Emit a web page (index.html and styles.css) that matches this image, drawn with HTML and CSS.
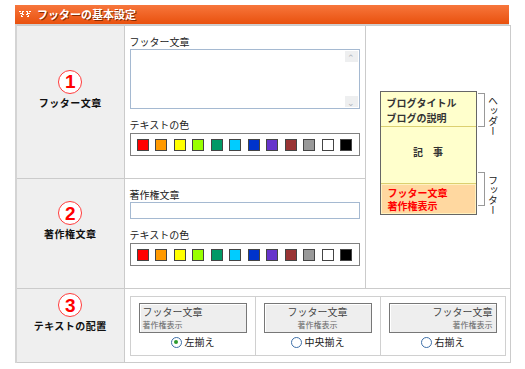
FILE: index.html
```html
<!DOCTYPE html>
<html>
<head>
    <title>フッターの基本設定</title>
    <meta http-equiv="Content-Type" content="text/html;charset=UTF-8"/>
    <link rel="stylesheet" href="styles.css">
</head>
<body>
<div class="setting-title">
    <svg class="title-icon" width="12" height="7" viewBox="0 0 12 7">
        <path d="M0 0h2v1H0zM3 0h2v1H3zM7 0h2v1H7zM10 0h2v1h-2zM1 2h2v1H1zM3 1h1v3H3zM8 1h1v3H8zM9 2h2v1H9zM2 4h1v2H2zM4 3h1v1H4zM7 3h1v1H7zM9 4h1v2H9zM3 5h1v1H3zM8 5h1v1H8z" fill="#fff"/>
    </svg>
    <span>フッターの基本設定</span>
</div>
<table class="setting-table">
    <colgroup>
        <col class="col-head">
        <col class="col-form">
        <col class="col-preview">
    </colgroup>
    <tr class="row-footer">
        <th class="item-head">
            <span class="step-num">1</span>
            <span class="item-name">フッター文章</span>
        </th>
        <td class="item-form">
            <div class="field-label">フッター文章</div>
            <div class="text-area">
                <div class="scroll-bar">
                    <span class="scroll-btn">&#8963;</span>
                    <span class="scroll-btn">&#8964;</span>
                </div>
            </div>
            <div class="field-label color-label">テキストの色</div>
            <div class="palette">
                <span class="swatch" style="background:#ff0000"></span>
                <span class="swatch" style="background:#ff9900"></span>
                <span class="swatch" style="background:#ffff00"></span>
                <span class="swatch" style="background:#99ff00"></span>
                <span class="swatch" style="background:#009966"></span>
                <span class="swatch" style="background:#00ccff"></span>
                <span class="swatch" style="background:#0033cc"></span>
                <span class="swatch" style="background:#6633cc"></span>
                <span class="swatch" style="background:#993333"></span>
                <span class="swatch" style="background:#999999"></span>
                <span class="swatch" style="background:#ffffff"></span>
                <span class="swatch" style="background:#000000"></span>
            </div>
        </td>
        <td class="item-preview" rowspan="2">
            <div class="blog-sample">
                <div class="blog-box">
                    <div class="blog-header">ブログタイトル<br>ブログの説明</div>
                    <div class="blog-article">記　事</div>
                    <div class="blog-footer">フッター文章<br>著作権表示</div>
                </div>
                <div class="blog-side">
                    <div class="side-mark">
                        <span class="bracket"></span>
                        <span class="side-name">ヘッダー</span>
                    </div>
                    <div class="side-mark">
                        <span class="bracket"></span>
                        <span class="side-name">フッター</span>
                    </div>
                </div>
            </div>
        </td>
    </tr>
    <tr class="row-copy">
        <th class="item-head">
            <span class="step-num">2</span>
            <span class="item-name">著作権文章</span>
        </th>
        <td class="item-form">
            <div class="field-label">著作権文章</div>
            <div class="text-input"></div>
            <div class="field-label color-label">テキストの色</div>
            <div class="palette">
                <span class="swatch" style="background:#ff0000"></span>
                <span class="swatch" style="background:#ff9900"></span>
                <span class="swatch" style="background:#ffff00"></span>
                <span class="swatch" style="background:#99ff00"></span>
                <span class="swatch" style="background:#009966"></span>
                <span class="swatch" style="background:#00ccff"></span>
                <span class="swatch" style="background:#0033cc"></span>
                <span class="swatch" style="background:#6633cc"></span>
                <span class="swatch" style="background:#993333"></span>
                <span class="swatch" style="background:#999999"></span>
                <span class="swatch" style="background:#ffffff"></span>
                <span class="swatch" style="background:#000000"></span>
            </div>
        </td>
    </tr>
    <tr class="row-align">
        <th class="item-head">
            <span class="step-num">3</span>
            <span class="item-name">テキストの配置</span>
        </th>
        <td class="item-align" colspan="2">
            <div class="align-box">
                <div class="align-cell">
                    <div class="align-sample align-left">フッター文章<br><small>著作権表示</small></div>
                    <div class="align-radio"><span class="radio checked"></span>左揃え</div>
                </div>
                <div class="align-cell">
                    <div class="align-sample align-center">フッター文章<br><small>著作権表示</small></div>
                    <div class="align-radio"><span class="radio"></span>中央揃え</div>
                </div>
                <div class="align-cell">
                    <div class="align-sample align-right">フッター文章<br><small>著作権表示</small></div>
                    <div class="align-radio"><span class="radio"></span>右揃え</div>
                </div>
            </div>
        </td>
    </tr>
</table>
</body>
</html>
```

FILE: styles.css
```css
body {
    margin: 0;
    padding: 5px 16px 0 15px;
    background: #fff;
    font-family: "Noto Sans CJK JP", "Liberation Sans", sans-serif;
    font-size: 10px;
    color: #222;
}

.setting-title {
    display: flex;
    align-items: center;
    gap: 6px;
    width: 494px;
    height: 20px;
    padding-left: 4px;
    box-sizing: border-box;
    background: linear-gradient(#f7763c, #e9510e);
    border-bottom: 1px solid #cfcfcf;
    color: #fff;
    font-size: 11px;
    font-weight: bold;
    line-height: 19px;
    text-shadow: 1px 1px 0 #8a2a00;
}

.title-icon {
    display: block;
}

.setting-table {
    width: 494px;
    border-collapse: collapse;
    table-layout: fixed;
    font-size: 10px;
}

.col-head {
    width: 108px;
}

.col-form {
    width: 241px;
}

.col-preview {
    width: 145px;
}

.setting-table th,
.setting-table td {
    border: 1px solid #cbcbcb;
    padding: 0;
}

.setting-table th:first-child {
    border-left: 2px solid #d4d4d4;
}

.row-footer {
    height: 153px;
}

.row-copy {
    height: 110px;
}

.row-align {
    height: 74px;
}

.item-head {
    background: #efefef;
    vertical-align: middle;
    padding-bottom: 26px !important;
}

.step-num {
    display: flex;
    align-items: center;
    justify-content: center;
    width: 22px;
    height: 22px;
    margin: 0 auto 3px;
    border: 1px solid #ff3a3a;
    border-radius: 50%;
    background: #fff;
    color: #f00;
    font-family: "Liberation Sans", sans-serif;
    font-size: 19px;
    font-weight: bold;
    line-height: 1;
}

.item-name {
    display: block;
    font-size: 10px;
    font-weight: bold;
    line-height: 12px;
    color: #111;
    letter-spacing: 0.5px;
}

.item-form {
    vertical-align: top;
    padding: 10px 0 0 5px !important;
}

.field-label {
    height: 12px;
    line-height: 12px;
    color: #222;
}

.color-label {
    margin-top: 10px;
}

.text-area {
    display: flex;
    justify-content: flex-end;
    width: 230px;
    height: 60px;
    margin-top: 1px;
    border: 1px solid #a5b9d1;
    box-sizing: border-box;
}

.scroll-bar {
    display: flex;
    flex-direction: column;
    justify-content: space-between;
    width: 13px;
    padding: 1px 1px 1px 0;
}

.scroll-btn {
    display: block;
    height: 11px;
    background: #eeeff0;
    color: #b0b4ba;
    font-size: 9px;
    line-height: 13px;
    text-align: center;
}

.text-input {
    width: 230px;
    height: 17px;
    margin-top: 1px;
    border: 1px solid #a5b9d1;
    box-sizing: border-box;
}

.palette {
    display: flex;
    align-items: center;
    justify-content: space-between;
    width: 230px;
    height: 23px;
    margin-top: 2px;
    padding: 0 6px 0 6px;
    border: 1px solid #7f7f7f;
    box-sizing: border-box;
}

.swatch {
    width: 10px;
    height: 10px;
    border: 1px solid #444;
}

.item-preview {
    vertical-align: middle;
    padding: 0 0 8px 14px !important;
}

.blog-sample {
    display: flex;
}

.blog-box {
    width: 97px;
    border: 1px solid #666;
    box-sizing: border-box;
    font-weight: bold;
}

.blog-header {
    height: 35px;
    padding: 3px 0 0 6px;
    box-sizing: border-box;
    background: #ffffcc;
    border-bottom: 1px solid #dcd070;
    color: #333;
    line-height: 15px;
}

.blog-article {
    height: 57px;
    padding-top: 17px;
    box-sizing: border-box;
    background: #ffffcc;
    border-bottom: 1px solid #dcd070;
    color: #333;
    text-align: center;
}

.blog-footer {
    height: 30px;
    padding: 1px 0 0 6px;
    box-sizing: border-box;
    background: #ffd8a0;
    border: 1px solid #fff2c0;
    color: #f00;
    line-height: 13px;
}

.blog-side {
    display: flex;
    flex-direction: column;
    justify-content: space-between;
    padding: 2px 0 0 1px;
}

.side-mark {
    display: flex;
    align-items: flex-start;
    gap: 3px;
}

.bracket {
    width: 6px;
    height: 32px;
    border: 1px solid #999;
    border-left: none;
}

.side-name {
    writing-mode: vertical-rl;
    font-size: 10px;
    line-height: 10px;
    padding-top: 3px;
    color: #222;
}

.item-align {
    vertical-align: top;
    padding: 7px 4px 0 5px !important;
}

.align-box {
    display: flex;
    height: 60px;
    border: 1px solid #d0d0d0;
    box-sizing: border-box;
}

.align-cell {
    flex: 1;
    display: flex;
    flex-direction: column;
    align-items: center;
    padding-top: 6px;
    border-right: 1px solid #d0d0d0;
}

.align-cell:last-child {
    border-right: none;
}

.align-sample {
    width: 108px;
    height: 30px;
    padding: 2px 3px;
    box-sizing: border-box;
    background: #eeeeee;
    border: 1px solid #777;
    box-shadow: inset 1px 1px 0 #fff;
    color: #444;
    font-size: 10px;
    line-height: 12px;
}

.align-sample small {
    font-size: 8px;
    color: #666;
}

.align-left {
    text-align: left;
}

.align-center {
    text-align: center;
}

.align-right {
    text-align: right;
}

.align-radio {
    display: flex;
    align-items: center;
    gap: 3px;
    margin-top: 3px;
    color: #222;
    font-size: 10px;
    line-height: 12px;
}

.radio {
    display: flex;
    align-items: center;
    justify-content: center;
    width: 9px;
    height: 9px;
    border: 1px solid #3d6fa8;
    border-radius: 50%;
    background: #fff;
}

.radio.checked::after {
    content: "";
    width: 4px;
    height: 4px;
    border-radius: 50%;
    background: #2e9b2e;
}
```
